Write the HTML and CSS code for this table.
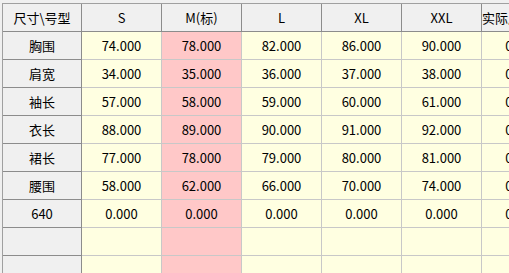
FILE: index.html
```html
<!DOCTYPE html>
<html lang="zh-CN">
<head>
<meta charset="utf-8">
<title>尺寸表</title>
<link rel="stylesheet" href="styles.css">
</head>
<body>
<div class="frame">
<table class="grid">
  <colgroup>
    <col class="c-head">
    <col class="c-data"><col class="c-data"><col class="c-data"><col class="c-data"><col class="c-data"><col class="c-data">
  </colgroup>
  <thead>
    <tr>
      <th class="corner">尺寸\号型</th>
      <th>S</th>
      <th>M(标)</th>
      <th>L</th>
      <th>XL</th>
      <th>XXL</th>
      <th>实际尺寸(cm)</th>
    </tr>
  </thead>
  <tbody>
    <tr><th>胸围</th><td>74.000</td><td class="std">78.000</td><td>82.000</td><td>86.000</td><td>90.000</td><td>0.000</td></tr>
    <tr><th>肩宽</th><td>34.000</td><td class="std">35.000</td><td>36.000</td><td>37.000</td><td>38.000</td><td>0.000</td></tr>
    <tr><th>袖长</th><td>57.000</td><td class="std">58.000</td><td>59.000</td><td>60.000</td><td>61.000</td><td>0.000</td></tr>
    <tr><th>衣长</th><td>88.000</td><td class="std">89.000</td><td>90.000</td><td>91.000</td><td>92.000</td><td>0.000</td></tr>
    <tr><th>裙长</th><td>77.000</td><td class="std">78.000</td><td>79.000</td><td>80.000</td><td>81.000</td><td>0.000</td></tr>
    <tr><th>腰围</th><td>58.000</td><td class="std">62.000</td><td>66.000</td><td>70.000</td><td>74.000</td><td>0.000</td></tr>
    <tr><th>640</th><td>0.000</td><td class="std">0.000</td><td>0.000</td><td>0.000</td><td>0.000</td><td>0.000</td></tr>
    <tr><th></th><td></td><td class="std"></td><td></td><td></td><td></td><td></td></tr>
    <tr><th></th><td></td><td class="std"></td><td></td><td></td><td></td><td></td></tr>
  </tbody>
</table>
</div>
</body>
</html>
```
FILE: styles.css
```css
html, body {
  margin: 0;
  padding: 0;
  background: #f0f0f0;
  overflow: hidden;
  width: 509px;
  height: 273px;
}

.frame {
  padding: 3px 0 0 2px;
}

.grid {
  border-collapse: separate;
  border-spacing: 0;
  table-layout: fixed;
  width: 559px;
  border-top: 1px solid #a0a0a0;
  border-left: 1px solid #a0a0a0;
  font-family: "Noto Sans CJK SC", "Liberation Sans", sans-serif;
  font-size: 13px;
  color: #000;
}

.c-head { width: 79px; }
.c-data { width: 80px; }

.grid th,
.grid td {
  height: 26px;
  padding: 1px 0 0 0;
  text-align: center;
  vertical-align: middle;
  white-space: nowrap;
  overflow: hidden;
  line-height: 26px;
  box-sizing: content-box;
}

.grid th {
  background: #f0f0f0;
  font-weight: normal;
  border-right: 1px solid #8c8c8c;
  border-bottom: 1px solid #8c8c8c;
}

.grid td {
  background: #ffffe1;
  border-right: 1px solid #c8c8c8;
  border-bottom: 1px solid #c8c8c8;
}

.grid td.std {
  background: #ffc8c8;
}
```
